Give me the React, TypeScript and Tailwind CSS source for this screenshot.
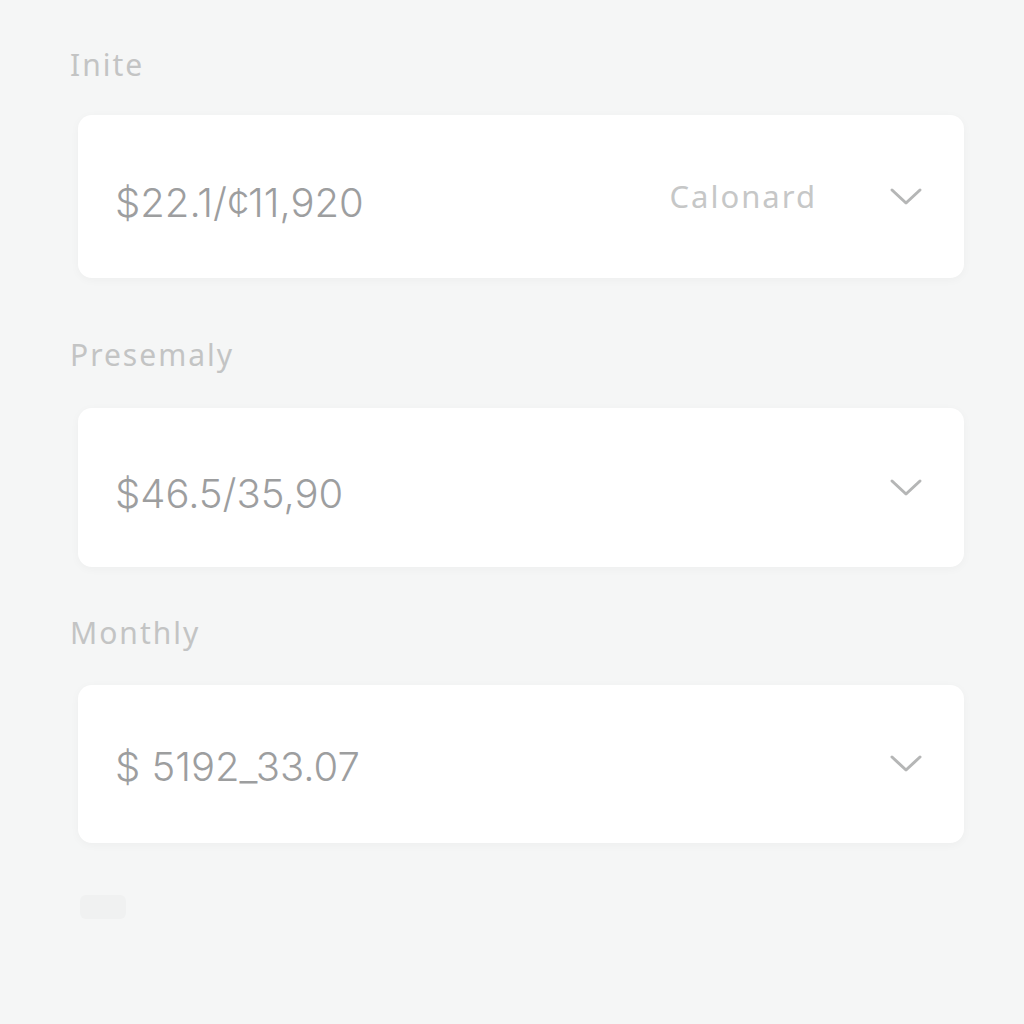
import React from "react";

function Chevron() {
  return (
    <svg width="34" height="20" viewBox="0 0 34 20" fill="none" className="shrink-0">
      <path d="M3 3 L17 16 L31 3" stroke="#b5b6b6" strokeWidth="3" strokeLinecap="round" strokeLinejoin="round" />
    </svg>
  );
}

function Card({ amount, extra, h, mt, pt }: { amount: string; extra?: string; h: string; mt: string; pt: string }) {
  return (
    <div
      className={`ml-2 ${mt} ${h} flex items-center rounded-[14px] bg-white pl-[37px] pr-[41px] shadow-[0_2px_10px_rgba(0,0,0,0.035)]`}
    >
      <div
        className={`flex-1 ${pt} text-[40px] font-light leading-none tracking-[0px] text-[#9d9e9f]`}
        style={{ fontFamily: "Inter, 'Open Sans', sans-serif", fontVariantNumeric: "normal", fontFeatureSettings: "'frac' 0" }}
      >
        {amount}
      </div>
      {extra && (
        <div
          className="mr-[72px] text-[31px] leading-none tracking-[2px] text-[#c6c7c7]"
          style={{ fontFamily: "'Noto Sans', 'Open Sans', sans-serif" }}
        >
          {extra}
        </div>
      )}
      <Chevron />
    </div>
  );
}

function Label({ text, mt }: { text: string; mt: string }) {
  return (
    <div
      className={`${mt} h-[34px] text-[30px] leading-[34px] tracking-[2px] text-[#c3c4c4]`}
      style={{ fontFamily: "'Noto Sans', 'DejaVu Sans', sans-serif" }}
    >
      {text}
    </div>
  );
}

export default function App() {
  return (
    <div className="min-h-screen w-full bg-[#f5f6f6] pl-[70px] pr-[60px] pt-[48px] pb-10">
      <Label text="Inite" mt="mt-0" />
      <Card amount="$22.1/¢11,920" extra="Calonard" h="h-[163px]" mt="mt-[33px]" pt="pt-[12px]" />
      <Label text="Presemaly" mt="mt-[60px]" />
      <Card amount="$46.5/35,90" h="h-[159px]" mt="mt-[36px]" pt="pt-[12px]" />
      <Label text="Monthly" mt="mt-[49px]" />
      <Card amount="$ 5192_33.07" h="h-[158px]" mt="mt-[35px]" pt="pt-[6px]" />
      <div className="ml-[10px] mt-[52px] h-[24px] w-[46px] rounded-md bg-[#f0f1f1]" />
    </div>
  );
}
